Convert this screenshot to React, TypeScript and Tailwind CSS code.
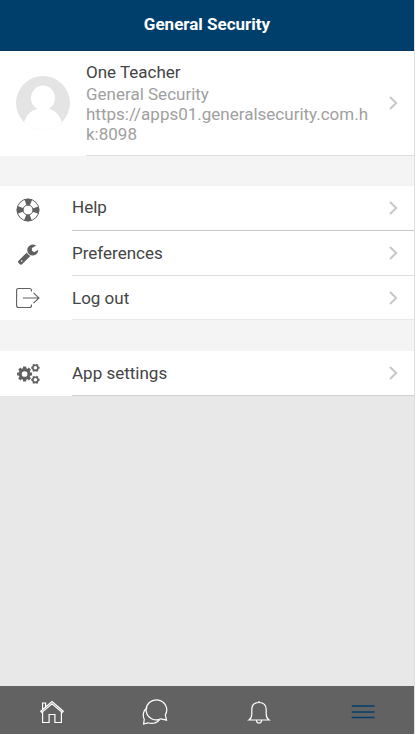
import React from "react";

function Chevron() {
  return (
    <svg className="h-[14px] w-[9px] shrink-0" viewBox="0 0 9 14" fill="none" stroke="#c7c7cc" strokeWidth="2">
      <path d="M1 1l6.200 6L1 13" />
    </svg>
  );
}

function LifeRing() {
  return (
    <svg className="mt-[2px] size-6" viewBox="0 0 24 24" fill="none" stroke="#606060">
      <circle cx="12" cy="12" r="8" strokeWidth="6.500" strokeDasharray="5.600 6.966" strokeDashoffset="2.800" />
      <circle cx="12" cy="12" r="11" strokeWidth="1" />
      <circle cx="12" cy="12" r="5" strokeWidth="1" />
    </svg>
  );
}

function Wrench() {
  return (
    <svg className="ml-px size-[22px]" viewBox="0 0 1792 1792" fill="#606060">
      <path d="M448 1472q0-26-19-45t-45-19-45 19-19 45 19 45 45 19 45-19 19-45zm644-420l-682 682q-37 37-90 37-52 0-91-37l-106-108q-38-36-38-90 0-53 38-91l681-681q39 98 114.500 173.500t173.500 114.500zm634-435q0 39-23 106-47 134-164.500 217.500t-258.500 83.500q-185 0-316.500-131.500t-131.500-316.500 131.500-316.500 316.500-131.500q58 0 121.500 16.500t107.500 46.500q16 11 16 28t-16 28l-293 169v224l193 107q5-3 79-48.500t135.500-81 70.500-35.500q15 0 23.500 10t8.500 25z" />
    </svg>
  );
}

function LogOut() {
  return (
    <svg className="size-6" viewBox="0 0 24 24" fill="none" stroke="#606060" strokeWidth="1.100">
      <path d="M15.500 5.500V4.500Q15.500 2.500 13.500 2.500H2.500Q.6 2.500 .6 4.500V19.500Q.6 21.500 2.500 21.500H13.500Q15.500 21.500 15.500 19.500V18.500M7 12H23M17.500 6.800L23 12l-5.500 5.200" />
    </svg>
  );
}

function Gear({ x, y, r, w, t }: { x: number; y: number; r: number; w: number; t: number }) {
  const teeth = r > 4 ? [0, 45, 90, 135] : [0, 60, 120];
  return (
    <g transform={`translate(${x} ${y})`} stroke="#606060" fill="none">
      <circle r={r} strokeWidth={w} />
      {teeth.map((a) => (
        <g key={a} transform={`rotate(${a})`} strokeWidth={t}>
          <path d={`M${r} 0H${r + w}M${-r} 0H${-r - w}`} />
        </g>
      ))}
    </g>
  );
}

function Gears() {
  return (
    <svg className="size-6" viewBox="0 0 24 24">
      <Gear x={8.6} y={12} r={4.4} w={3.1} t={3.2} />
      <Gear x={19.4} y={5.8} r={2.6} w={1.6} t={1.9} />
      <Gear x={19.4} y={17.8} r={2.6} w={1.6} t={1.9} />
    </svg>
  );
}

function Row({ icon, label, size, line }: { icon: React.ReactNode; label: React.ReactNode; size: string; line: string }) {
  return (
    <div className={`flex bg-white ${size}`}>
      <div className="flex w-[72px] items-center pl-4">{icon}</div>
      <div className={`flex flex-1 items-center justify-between border-b pr-4 ${line}`}>
        <span>{label}</span>
        <Chevron />
      </div>
    </div>
  );
}

export default function App() {
  return (
    <div className="flex h-[734px] w-[415px] flex-col border-r border-[#dedede] bg-[#e8e8e8] font-['Roboto',sans-serif] text-[17px] leading-5 text-[#444]">
      <header className="flex h-[51px] items-center justify-center border-b border-[#00335c] bg-[#003f6c] pb-[2px] font-bold text-white">
        General Security
      </header>
      <section className="flex h-[105px] bg-white">
        <div className="flex w-[86px] items-center pb-px pl-4">
          <svg className="h-[54px] w-[54px]" viewBox="0 0 54 54">
            <defs>
              <clipPath id="avatar"><circle cx="27" cy="27" r="27" /></clipPath>
            </defs>
            <g clipPath="url(#avatar)">
              <path d="M0 0h54v54H0z" fill="#e4e4e4" />
              <ellipse cx="27" cy="22" rx="12" ry="12.500" fill="#fff" />
              <path d="M21 29h12v4q9 2 13 13v8H8v-8q4-11 13-13z" fill="#fff" />
            </g>
          </svg>
        </div>
        <div className="flex flex-1 items-center justify-between border-b border-[#dedede] pr-4">
          <div>
            <h2 className="mb-[2px]">One Teacher</h2>
            <p className="text-[#a0a0a0]">General Security<br />https://apps01.generalsecurity.com.h<br />k:8098</p>
          </div>
          <Chevron />
        </div>
      </section>
      <div className="h-[30px] bg-[#f4f4f4]" />
      <Row icon={<LifeRing />} label={<span className="block pb-[2px]">Help</span>} size="h-[45px]" line="border-[#c8c7cc]" />
      <Row icon={<Wrench />} label="Preferences" size="h-[45px]" line="border-[#dedede]" />
      <Row icon={<LogOut />} label="Log out" size="h-11" line="border-[#eaeaea]" />
      <div className="h-[31px] bg-[#f4f4f4]" />
      <Row icon={<Gears />} label="App settings" size="h-[45px]" line="border-[#d0d0d4]" />
      <nav className="mt-auto grid h-12 grid-cols-4 place-items-center bg-[#626262] pt-1 text-white">
        <svg className="size-6" viewBox="0 0 24 24" fill="none" stroke="currentColor" strokeWidth="1.200">
          <path d="M.8 11.200L12 1.500l11.200 9.700-1 1.200L12 3.900 1.800 12.400zM2.600 12v10.500h6.500V14.500h5.800v8h6.500V12M2.600 9V3h3v3.500" />
        </svg>
        <svg className="size-[26px]" viewBox="0 0 26 26" fill="none" stroke="currentColor" strokeWidth="1.200">
          <path d="M24.500 21.200l-1.200-5.300A10.300 10 0 1 0 19 19.800zM5.300 8.500Q1 11.500 1.300 17q.1 1.800 1 3.200L1.600 25l4.400-1.200Q12.500 26 17.500 20.800" />
        </svg>
        <svg className="size-6" viewBox="0 0 24 24" fill="none" stroke="currentColor" strokeWidth="1.200">
          <path d="M2 20h20q-2.800-1.800-2.800-6V9.500q0-7-7.200-7t-7.200 7V14q0 4.200-2.800 6zM9.500 20.500q0 2.500 2.500 2.500t2.500-2.500M12 1v1.500" />
        </svg>
        <svg className="ml-px size-6" viewBox="0 0 24 24" stroke="#003f6c" strokeWidth="1.700">
          <path d="M.8 6h22.700M.8 12h22.700M.8 17.500h22.700" />
        </svg>
      </nav>
    </div>
  );
}
